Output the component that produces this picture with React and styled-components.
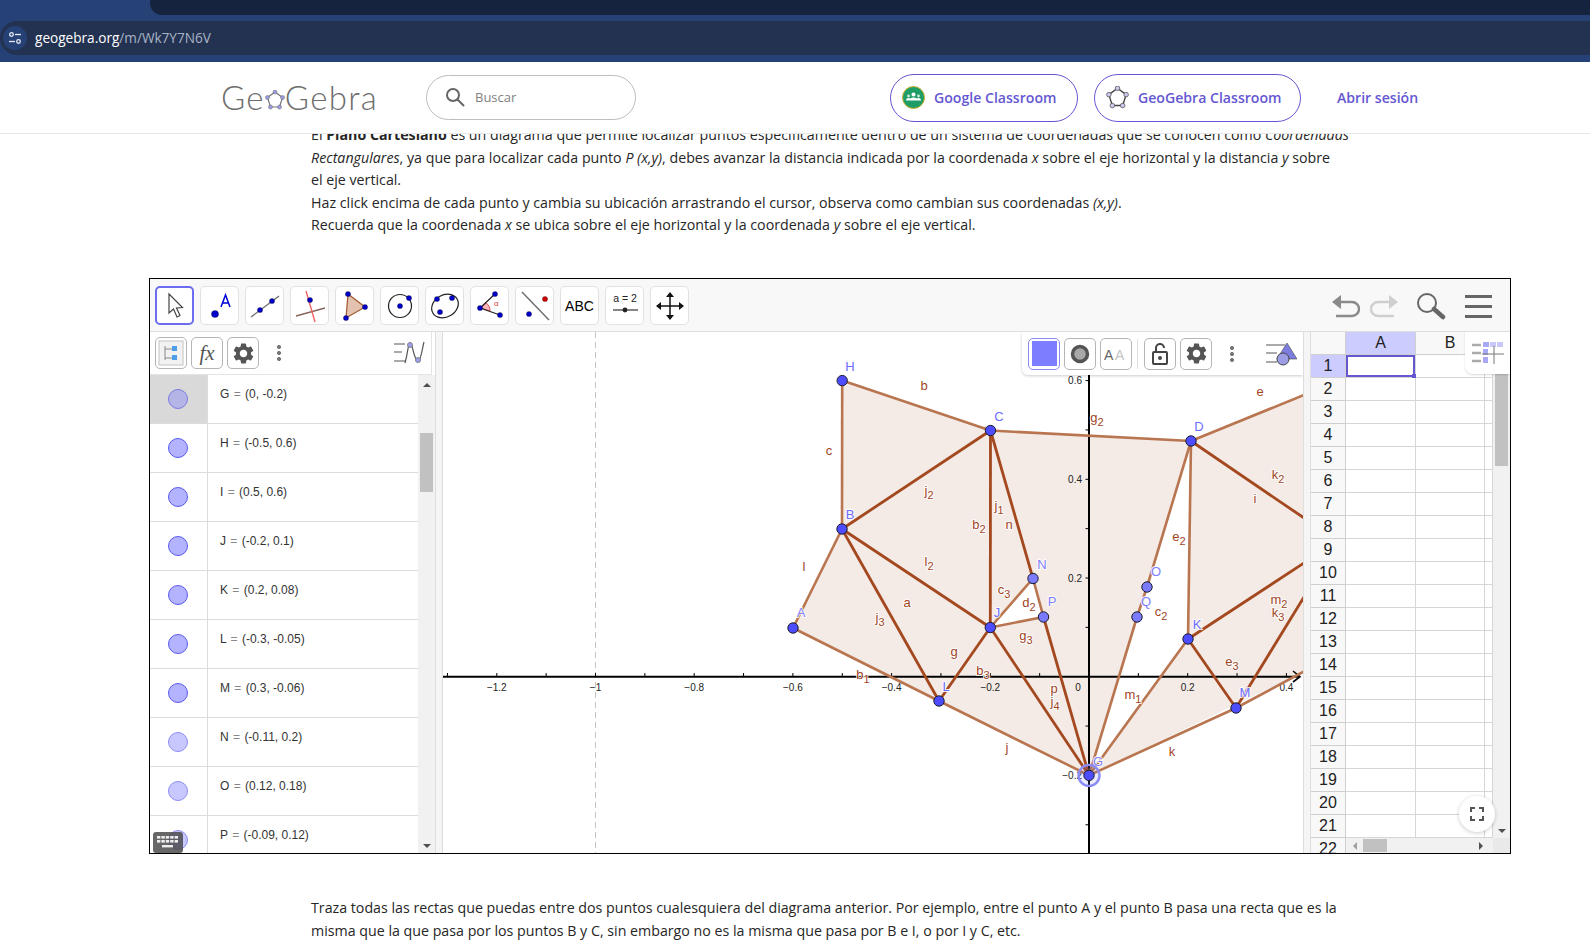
import React from 'react';
import styled, { createGlobalStyle } from 'styled-components';
import { MdSettings } from 'react-icons/md';

const Global = createGlobalStyle`
  html, body { margin: 0; padding: 0; background: #fff; }
  body { font-family: "Open Sans", "Liberation Sans", sans-serif; }
  * { box-sizing: border-box; }
`;

const Page = styled.div`width: 1590px; height: 943px; overflow: hidden; background: #fff;`;

/* browser chrome */
const Chrome = styled.div`height: 62px; background: #264176; display: flex; flex-direction: column;`;
const TabStrip = styled.div`height: 21px; display: flex; padding-left: 150px;`;
const Tab = styled.div`flex: 1; height: 15px; background: #16233f; border-bottom-left-radius: 12px;`;
const Omnibox = styled.div`
  height: 34px; background: #233251; display: flex; align-items: center; gap: 8px;
  border-radius: 17px 0 0 17px; padding-left: 3px;
`;
const SiteBadge = styled.div`
  width: 24px; height: 24px; border-radius: 50%; background: #264176;
  display: flex; align-items: center; justify-content: center;
`;
const Url = styled.div`font-size: 13.6px; color: #fff; font-family: "Open Sans", sans-serif; padding-bottom: 2px; span { color: #a9b3c6; }`;

/* site header */
const Header = styled.header`
  position: relative; z-index: 2; height: 72px; background: #fff; border-bottom: 1px solid #e6e6e6;
  display: flex; align-items: center; padding-left: 221px; margin-bottom: -10px;
`;
const Logo = styled.div`
  display: flex; align-items: center; width: 205px; color: #6d6d6d; letter-spacing: 1.3px;
  font-family: Lato, sans-serif; font-weight: 300; font-size: 33px; line-height: 1;
  svg { margin: 4px 0 0 0; }
`;
const Search = styled.div`
  width: 210px; height: 45px; border: 1px solid #bdbdbd; border-radius: 23px; display: flex; align-items: center;
  padding-left: 18px; gap: 10px; font-size: 13px; color: #7f7f7f; margin-top: -1px;
`;
const Pill = styled.div`
  height: 48px; border: 1px solid #6557d2; border-radius: 24px; display: flex; align-items: center; gap: 9px;
  color: #6557d2; font-size: 14.1px; font-weight: 600; width: ${p => p.$w}px; padding-left: ${p => p.$pl}px;
  margin-left: ${p => p.$ml}px;
`;
const Login = styled.div`color: #6557d2; font-size: 14.1px; font-weight: 600; margin-left: 36px; margin-bottom: 1px;`;

/* text */
const Article = styled.div`
  width: 1060px; margin-left: 311px; font-size: 14.22px; line-height: 22.5px; color: #262626;
  font-family: "Open Sans", sans-serif;
`;
const Line = styled.div`white-space: nowrap;`;

/* applet */
const Applet = styled.div`
  width: 1362px; height: 576px; margin: 41.5px 0 43px 149px; border: 1px solid #000; display: flex; flex-direction: column;
  font-family: "Liberation Sans", Arial, sans-serif; background: #fff; overflow: hidden;
`;
const Toolbar = styled.div`
  height: 53px; flex: none; background: #f8f8f8; border-bottom: 1px solid #dedede; display: flex; align-items: flex-start;
  padding: 7px 0 0 5px; gap: 6px; position: relative;
`;
const ToolBtn = styled.div`
  width: 39px; height: 39px; border-radius: 5px; background: #fff;
  border: ${p => p.$on ? '2px solid #6c6cf0' : '1px solid #e2e2e2'};
  display: flex; align-items: center; justify-content: center; color: #000; font-size: 14px;
`;
const ToolRight = styled.div`margin-left: auto; display: flex; align-items: center; gap: 11px; padding: 6px 18px 0 0;`;
const Body = styled.div`flex: 1; display: flex; min-height: 0;`;

const AlgebraPanel = styled.div`width: 285px; flex: none; display: flex; flex-direction: column; position: relative;`;
const MiniBar = styled.div`
  height: 43px; flex: none; width: 282px; border-bottom: 1px solid #e4e4e4; border-right: 1px solid #e4e4e4; background: #fff;
  display: flex; align-items: center; padding-left: 5px; gap: 4px;
`;
const StyleBtn = styled.div`
  width: 32px; height: 32px; border-radius: 5px; background: #fff; flex: none;
  border: ${p => p.$on ? '1.5px solid #8a8af5' : '1px solid #b5b5b5'};
  display: flex; align-items: center; justify-content: center; color: #555;
`;
const Dots = styled.div`
  width: 4px; height: 16px; margin: 0 ${p => p.$m || 14}px; flex: none;
  background: radial-gradient(circle at 50% 2px, #777 1.9px, transparent 2.2px) 0 0 / 4px 6px repeat-y;
`;
const Fx = styled.span`font-family: "Liberation Serif", serif; font-style: italic; font-size: 21px; color: #555;`;
const BarIcon = styled.div`margin-left: auto; margin-right: 6px; display: flex;`;
const ListWrap = styled.div`flex: 1; display: flex; min-height: 0;`;
const List = styled.div`flex: 1; overflow: hidden; background: #fff;`;
const Row = styled.div`height: 49px; display: flex; border-bottom: 1px solid #dcdcdc;`;
const MarbleCell = styled.div`
  width: 58px; flex: none; border-right: 1px solid #dcdcdc; background: ${p => p.$on ? '#d9d9d9' : '#fff'};
  display: flex; justify-content: center; padding: 14px 2px 0 0;
`;
const Marble = styled.div`
  width: 20px; height: 20px; border-radius: 50%; border: 1px solid ${p => p.$on ? '#7d7de0' : p.$soft ? '#8d8df0' : '#5a5af0'};
  background: ${p => p.$on ? '#b4b4e6' : p.$soft ? '#c8c8ff' : '#b3b3ff'};
`;
const Formula = styled.div`padding: 11px 0 0 12px; font-size: 12px; line-height: 16px; color: #333; white-space: nowrap; i { font-style: normal; color: #888; margin: 0 1px; }`;
const VBar = styled.div`
  width: 17px; flex: none; background: #f1f1f1; display: flex; flex-direction: column; align-items: center;
`;
const Up = styled.div`width: 0; height: 0; margin-top: 8px; border: 4px solid transparent; border-top: 0; border-bottom: 4px solid #505050;`;
const Down = styled.div`width: 0; height: 0; margin: auto 0 5px; border: 4px solid transparent; border-bottom: 0; border-top: 4px solid #505050;`;
const Thumb = styled.div`width: 13px; height: ${p => p.$h}px; margin-top: ${p => p.$t}px; background: #c1c1c1;`;
const Keyboard = styled.div`
  position: absolute; left: 3px; bottom: 0; width: 30px; height: 21px; border-radius: 3px; background: rgba(70,70,70,.82);
  display: flex; align-items: center; justify-content: center;
`;
const Splitter = styled.div`width: 8px; flex: none; background: #f5f5f5; border-left: 1px solid #dedede; border-right: 1px solid #dedede;`;
const GraphPanel = styled.div`flex: none; width: 860px; position: relative; overflow: hidden; background: #fff;`;
const GraphSvg = styled.svg`display: block; width: 860px; height: 521px;`;
const StyleBar = styled.div`
  position: absolute; top: 0; right: 0; width: 281px; height: 43px; background: #fff; border-radius: 0 0 0 6px;
  box-shadow: 0 1px 3px rgba(0,0,0,.2); display: flex; align-items: center; padding-left: 6px; gap: 4px;
`;
const Sep = styled.div`width: 1px; height: 30px; background: #e0e0e0; margin: 0 2px 0 1px;`;
const Sheet = styled.div`flex: 1; display: flex; position: relative; min-width: 0; overflow: hidden;`;
const Grid = styled.div`flex: 1; overflow: hidden; display: flex; flex-direction: column;`;
const SRow = styled.div`height: ${p => p.$h || 23}px; flex: none; display: grid; grid-template-columns: 35px 70px 69px 8px;`;
const RowHead = styled.div`
  background: ${p => p.$on ? '#ccccff' : '#f8f8f8'}; border-right: 1px solid #cfcfcf; border-bottom: 1px solid #cfcfcf;
  font-size: 16px; color: #222; display: flex; align-items: center; justify-content: center;
`;
const Cell = styled.div`
  border-right: 1px solid #d6d6d6; border-bottom: 1px solid #d6d6d6; background: #fff; position: relative;
  ${p => p.$on && `
    box-shadow: inset 0 0 0 2px #6557d2;
    &::after { content: ""; position: absolute; right: -3px; bottom: -3px; width: 6px; height: 6px; background: #6557d2; }
  `}
`;
const SheetV = styled(VBar)`position: relative;`;
const HBar = styled.div`
  position: absolute; left: 35px; right: 0; bottom: 0; height: 15px; background: #f1f1f1; display: flex; align-items: center; padding-left: 7px;
`;
const LeftArrow = styled.div`width: 0; height: 0; border: 4px solid transparent; border-left: 0; border-right: 4px solid #a0a0a0;`;
const RightArrow = styled.div`width: 0; height: 0; margin-left: 92px; border: 4px solid transparent; border-right: 0; border-left: 4px solid #505050;`;
const HThumb = styled.div`width: 24px; height: 13px; background: #c1c1c1; margin-left: 6px;`;
const Corner = styled.div`position: absolute; right: 0; bottom: 0; width: 17px; height: 15px; background: #e9e9e9;`;
const SheetCorner = styled.div`
  position: absolute; right: 0; top: 0; width: 45px; height: 42px; background: #fff; border-radius: 0 0 0 8px;
  box-shadow: 0 1px 2px rgba(0,0,0,.15); display: flex; align-items: center; justify-content: center;
`;
const Fullscreen = styled.div`
  position: absolute; right: 15px; bottom: 21px; width: 36px; height: 36px; border-radius: 50%; background: #fff;
  box-shadow: 0 1px 4px rgba(0,0,0,.2); display: flex; align-items: center; justify-content: center;
`;
const Lab = styled.text`
  font-family: "Liberation Sans", Arial, sans-serif; font-size: 13px; text-anchor: middle;
  fill: ${p => p.$c}; paint-order: stroke; stroke: rgba(255,255,255,.85); stroke-width: 2px;
`;
const Tick = styled.text`font-family: "Liberation Sans", Arial, sans-serif; font-size: 10px; fill: #222; text-anchor: ${p => p.$a || 'middle'};`;

const P = { A:[793,628],B:[842,529],C:[990.5,430.5],D:[1191,441],G:[1089,775.4],H:[842.2,380.6],J:[990.3,627.5],K:[1188,639],L:[939,701],M:[1236,708],N:[1033,578.5],O:[1147,587],P:[1043.5,617],Q:[1137,617] };
const EX = { I:[1337,381], T1:[1304,395], E:[1304,518], F:[1304,563], R:[1304,597], S:[1304,671.5] };
const pt = k => P[k] || EX[k];
const THIN = [['A','B'],['B','H'],['H','C'],['C','D'],['D','T1'],['A','L'],['L','G'],['G','M'],['M','S'],['G','Q'],['Q','O'],['O','D'],['D','K'],['K','G'],['J','N'],['J','P'],['N','P']];
const THICK = [['B','C'],['C','J'],['C','N'],['B','J'],['B','L'],['J','L'],['J','G'],['P','G'],['D','E'],['K','F'],['K','M'],['M','R']];
const poly = ks => ks.map((k,i) => `${i?'L':'M'}${pt(k).join(' ')}`).join(' ') + ' Z';
const FILL = poly(['A','B','H','C','D','T1','S','G','L']) + ' ' + poly(['G','D','K']) + ' ' + poly(['J','N','P']);

const BLUE = '#6c6cff', BROWN = '#a0451f';
const LABELS = [
  ['H',850,367,BLUE],['b',924,386],['C',999,417,BLUE],['c',829,451],['j','2',929,491],['j','1',999,506],['b','2',979,525],['n',1009,525],
  ['B',850,515,BLUE],['N',1042,565,'#8080ff'],['l','2',929,562],['l',804,567],['c','3',1004,590],['d','2',1029,603],['P',1052,602,'#8080ff'],['a',907,603],
  ['A',801,613,'#8080ff'],['j','3',880,618],['J',997,613,BLUE],['g','3',1026,636],['g',954,652],['b','3',983,671],['b','1',863,675],['L',946,687,BLUE],
  ['p',1054,689],['j','4',1055,702],['j',1007,748],['e',1260,392],['g','2',1097,418],['D',1199,427,BLUE],['k','2',1278,475],['i',1255,499],['e','2',1179,537],
  ['O',1156,572,'#8080ff'],['Q',1146,602,'#8080ff'],['c','2',1161,612],['m','2',1279,600],['k','3',1278,613],['K',1197,625,BLUE],['e','3',1232,662],['M',1245,693,BLUE],
  ['m','1',1133,695],['k',1172,752],['G',1098,762,'#8080ff'],
];
const Label = ({ d }) => {
  const sub = typeof d[1] === 'string';
  const [t, s, x, y, c] = sub ? d : [d[0], null, d[1], d[2], d[3]];
  return <Lab x={x} y={y + 4} $c={c || BROWN}>{t}{s && <tspan dy="4" fontSize="11">{s}</tspan>}</Lab>;
};
const xv = v => 1089 + 493.5 * v, yv = v => 676.7 - 493.5 * v;

const Graph = () => {
  const xt = []; for (let i = -13; i <= 4; i++) if (i) xt.push(i);
  const yt = []; for (let i = -3; i <= 6; i++) if (i) yt.push(i);
  return (
    <GraphSvg viewBox="443 332 860 521">
      <line x1={595.5} x2={595.5} y1={332} y2={853} stroke="#c4c4c4" strokeDasharray="6 4" />
      <path d={FILL} fill="#f4ebe6" fillRule="evenodd" />
      <line x1={443} x2={1300} y1={676.7} y2={676.7} stroke="#000" strokeWidth="2" />
      <line x1={1089} x2={1089} y1={374} y2={853} stroke="#000" strokeWidth="2" />
      <path d="M1293 671 L1300 676.7 L1293 682" fill="none" stroke="#000" strokeWidth="1.6" />
      {xt.map(i => <line key={i} x1={xv(i / 10)} x2={xv(i / 10)} y1={673} y2={677} stroke="#000" />)}
      {yt.map(i => <line key={i} x1={1085.5} x2={1089} y1={yv(i / 10)} y2={yv(i / 10)} stroke="#000" />)}
      {[['−1.2',-1.2],['−1',-1],['−0.8',-.8],['−0.6',-.6],['−0.4',-.4],['−0.2',-.2],['0.2',.2],['0.4',.4]].map(([t,v]) => <Tick key={t} x={xv(v)} y={691}>{t}</Tick>)}
      <Tick x={1078} y={691}>0</Tick>
      {[['0.6',.6],['0.4',.4],['0.2',.2],['−0.2',-.2]].map(([t,v]) => <Tick key={t} x={1082} y={yv(v) + 3.5} $a="end">{t}</Tick>)}
      {THIN.map(([a,b]) => <line key={a+b} x1={pt(a)[0]} y1={pt(a)[1]} x2={pt(b)[0]} y2={pt(b)[1]} stroke="#b8754f" strokeWidth="2.6" />)}
      {THICK.map(([a,b]) => <line key={a+b} x1={pt(a)[0]} y1={pt(a)[1]} x2={pt(b)[0]} y2={pt(b)[1]} stroke="#a4481f" strokeWidth="2.8" />)}
      {LABELS.map((d, i) => <Label key={i} d={d} />)}
      <circle cx={P.G[0]} cy={P.G[1]} r="10.5" fill="rgba(120,120,255,.15)" stroke="#8c8cf5" strokeWidth="2.4" />
      {Object.keys(P).map(k => (
        <circle key={k} cx={P[k][0]} cy={P[k][1]} r="5.2" fill={'NOPQ'.includes(k) ? '#7b7bff' : '#4d4dff'} stroke="#1c1c2c" strokeWidth="1" />
      ))}
    </GraphSvg>
  );
};

const Ic = ({ children, w = 34, h = 34 }) => <svg width={w} height={h} viewBox={`0 0 ${w} ${h}`}>{children}</svg>;
const Dot = ({ x, y, c = '#0000c8', r = 2.6 }) => <circle cx={x} cy={y} r={r} fill={c} stroke="#111" strokeWidth=".3" />;

const TOOLS = [
  <Ic><path d="M11 5 L11 24 L15.5 20 L19 28 L22 26.5 L18.5 19 L24.5 18.5 Z" fill="#fff" stroke="#444" strokeWidth="1.2" /></Ic>,
  <Ic><Dot x={12} y={25} r={3.6} /><path d="M18 18 L22.5 6 L27 18 M19.5 14 H25.5" fill="none" stroke="#0000d8" strokeWidth="1.5" /></Ic>,
  <Ic><line x1={3} y1={28} x2={31} y2={7} stroke="#707070" strokeWidth="1.4" /><Dot x={12} y={21} /><Dot x={24} y={12} /></Ic>,
  <Ic><line x1={3} y1={27} x2={32} y2={19} stroke="#84665c" strokeWidth="1.4" /><line x1={13} y1={2} x2={22} y2={33} stroke="#f06464" strokeWidth="1.4" /><Dot x={17} y={11} /></Ic>,
  <Ic><path d="M10 5 L27 18 L8 29 Z" fill="#e3c3b0" stroke="#a0562e" strokeWidth="1.2" /><Dot x={10} y={5} /><Dot x={27} y={18} /><Dot x={8} y={29} /></Ic>,
  <Ic><circle cx={17} cy={17} r={11.5} fill="none" stroke="#222" strokeWidth="1.2" /><Dot x={17} y={17} /><Dot x={26} y={9} /></Ic>,
  <Ic><ellipse cx={17} cy={17} rx={14} ry={11} transform="rotate(-30 17 17)" fill="none" stroke="#222" strokeWidth="1.2" /><Dot x={9} y={10} /><Dot x={24} y={9} /><Dot x={12} y={23} /></Ic>,
  <Ic><path d="M8 19 L13 14 A9 9 0 0 1 17 22 Z" fill="#f5b8b8" stroke="#e05050" strokeWidth="1" /><path d="M7 19 L22 5 M7 19 L27 26" fill="none" stroke="#222" strokeWidth="1.2" /><Dot x={7} y={19} /><Dot x={22} y={5} /><Dot x={27} y={26} /><text x={21} y={17} fontSize="8" fill="#e04040">α</text></Ic>,
  <Ic><line x1={4} y1={3} x2={31} y2={31} stroke="#707070" strokeWidth="1.5" /><Dot x={11} y={25} /><Dot x={27} y={10} c="#d00000" /></Ic>,
  <span>ABC</span>,
  <Ic><text x={17} y={13} fontSize="10.5" textAnchor="middle" fontFamily="Liberation Sans" fill="#222">a = 2</text><line x1={5} y1={21} x2={30} y2={21} stroke="#333" strokeWidth="1.2" /><circle cx={17} cy={21} r={2.4} fill="#222" /></Ic>,
  <Ic><path d="M17 5 V29 M5 17 H29" stroke="#111" strokeWidth="1.5" /><path d="M17 3 L21 8 H13 Z M17 31 L21 26 H13 Z M3 17 L8 13 V21 Z M31 17 L26 13 V21 Z" fill="#111" /></Ic>,
];

const ROWS = [['G','(0, -0.2)'],['H','(-0.5, 0.6)'],['I','(0.5, 0.6)'],['J','(-0.2, 0.1)'],['K','(0.2, 0.08)'],['L','(-0.3, -0.05)'],['M','(0.3, -0.06)'],['N','(-0.11, 0.2)',1],['O','(0.12, 0.18)',1],['P','(-0.09, 0.12)',1]];
const NUMS = Array.from({ length: 22 }, (_, i) => i + 1);

const Pentagon = ({ s = 20, c = '#555', f = '#9a9ae6' }) => (
  <svg width={s} height={s} viewBox="0 0 20 20">
    <path d="M10 2 L17.5 7.5 L14.5 17 L5.5 17 L2.5 7.5 Z" fill="none" stroke={c} strokeWidth="1.2" />
    {[[10,2],[17.5,7.5],[14.5,17],[5.5,17],[2.5,7.5]].map(([x,y],i) => <circle key={i} cx={x} cy={y} r="2" fill={f} stroke={c} strokeWidth=".6" />)}
  </svg>
);

export default function App() {
  return (
    <Page>
      <Global />
      <Chrome>
        <TabStrip><Tab /></TabStrip>
        <Omnibox>
          <SiteBadge>
            <svg width="14" height="14" viewBox="0 0 14 14" fill="none" stroke="#e6ebf5" strokeWidth="1.3"><circle cx="3.5" cy="3.5" r="1.8" /><path d="M7 3.5H13" /><circle cx="10.5" cy="10.5" r="1.8" /><path d="M1 10.5H7" /></svg>
          </SiteBadge>
          <Url>geogebra.org<span>/m/Wk7Y7N6V</span></Url>
        </Omnibox>
      </Chrome>
      <Header>
        <Logo>Ge<Pentagon s={20} c="#777" />Gebra</Logo>
        <Search>
          <svg width="20" height="20" viewBox="0 0 20 20" fill="none" stroke="#666" strokeWidth="2"><circle cx="8" cy="8" r="6" /><path d="M12.5 12.5 L18.5 18.5" strokeLinecap="round" /></svg>
          Buscar
        </Search>
        <Pill $w={188} $pl={11} $ml={254}>
          <svg width="23" height="23" viewBox="0 0 23 23"><circle cx="11.5" cy="11.5" r="11" fill="#1f9d66" stroke="#d0b030" strokeWidth="1" /><circle cx="11.5" cy="8.5" r="2" fill="#fff" /><circle cx="6.5" cy="10" r="1.4" fill="#cfe8d8" /><circle cx="16.5" cy="10" r="1.4" fill="#cfe8d8" /><path d="M7.5 14.5 a4 3 0 0 1 8 0 Z M4 14.5 a2.5 2.5 0 0 1 5 0 Z M14 14.5 a2.5 2.5 0 0 1 5 0 Z" fill="#fff" /></svg>
          Google Classroom
        </Pill>
        <Pill $w={207} $pl={11} $ml={16}>
          <Pentagon s={23} c="#444" f="#c9c9ee" />
          GeoGebra Classroom
        </Pill>
        <Login>Abrir sesión</Login>
      </Header>
      <Article>
        <Line>El <b>Plano Cartesiano</b> es un diagrama que permite localizar puntos específicamente dentro de un sistema de coordenadas que se conocen como <em>Coordenadas</em></Line>
        <Line><em>Rectangulares</em>, ya que para localizar cada punto <em>P (x,y)</em>, debes avanzar la distancia indicada por la coordenada <em>x</em> sobre el eje horizontal y la distancia <em>y</em> sobre</Line>
        <Line>el eje vertical.</Line>
        <Line>Haz click encima de cada punto y cambia su ubicación arrastrando el cursor, observa como cambian sus coordenadas <em>(x,y)</em>.</Line>
        <Line>Recuerda que la coordenada <em>x</em> se ubica sobre el eje horizontal y la coordenada <em>y</em> sobre el eje vertical.</Line>
      </Article>
      <Applet>
        <Toolbar>
          {TOOLS.map((t, i) => <ToolBtn key={i} $on={i === 0}>{t}</ToolBtn>)}
          <ToolRight>
            <svg width="28" height="24" viewBox="0 0 28 24" fill="none"><path d="M4 8 H20 a6 6 0 0 1 0 14 H4" stroke="#8a8a8a" strokeWidth="2.4" /><path d="M0 8 L9 1 V15 Z" fill="#8a8a8a" /></svg>
            <svg width="28" height="24" viewBox="0 0 28 24" fill="none" style={{ marginLeft: -1 }}><path d="M24 8 H8 a6 6 0 0 0 0 14 H24" stroke="#cfcfcf" strokeWidth="2.4" /><path d="M28 8 L19 1 V15 Z" fill="#cfcfcf" /></svg>
            <svg width="30" height="28" viewBox="0 0 30 28" fill="none" style={{ margin: '0 8px 0 7px' }}><circle cx="11" cy="11" r="9" stroke="#666" strokeWidth="2" /><path d="M18 17 L27 25" stroke="#666" strokeWidth="4.5" strokeLinecap="round" /></svg>
            <svg width="27" height="24" viewBox="0 0 27 24"><path d="M0 2.5H27M0 12.5H27M0 22.5H27" stroke="#666" strokeWidth="3" /></svg>
          </ToolRight>
        </Toolbar>
        <Body>
          <AlgebraPanel>
            <MiniBar>
              <StyleBtn $on={false}>
                <svg width="26" height="26" viewBox="0 0 26 26" fill="none"><rect x="1" y="1" width="24" height="24" fill="#f2f2f2" stroke="#c4c4c4" /><path d="M7 6 V20 M7 9 H15 M7 18 H15" stroke="#888" /><rect x="14" y="6" width="5" height="5" fill="#4f9ee8" /><rect x="14" y="15" width="5" height="5" fill="#4f9ee8" /></svg>
              </StyleBtn>
              <StyleBtn><Fx>fx</Fx></StyleBtn>
              <StyleBtn><MdSettings size={25} color="#555" /></StyleBtn>
              <Dots $m={14} />
              <BarIcon>
                <svg width="32" height="24" viewBox="0 0 32 24" fill="none"><path d="M1 3H12M1 11H9M1 20H12" stroke="#aaa" strokeWidth="2" /><path d="M12 22 C15 12 15 2 17 2 C20 2 20 18 25 20 C28 20 29 8 31 1" stroke="#555" strokeWidth="1.2" /><circle cx="17" cy="4" r="2.6" fill="#9d9de6" stroke="#666" strokeWidth=".6" /><circle cx="25" cy="19" r="2.6" fill="#9d9de6" stroke="#666" strokeWidth=".6" /></svg>
              </BarIcon>
            </MiniBar>
            <ListWrap>
              <List>
                {ROWS.map(([n, v, soft], i) => (
                  <Row key={n}>
                    <MarbleCell $on={i === 0}><Marble $on={i === 0} $soft={soft} /></MarbleCell>
                    <Formula>{n} <i>=</i> {v}</Formula>
                  </Row>
                ))}
              </List>
              <VBar><Up /><Thumb $h={59} $t={46} /><Down /></VBar>
            </ListWrap>
            <Keyboard>
              <svg width="22" height="15" viewBox="0 0 22 15" fill="#eee">
                {[0,1,2,3,4].map(i => <rect key={i} x={i * 4.4} y="1" width="3.4" height="2.6" />)}
                {[0,1,2,3,4].map(i => <rect key={i} x={i * 4.4} y="5" width="3.4" height="2.6" />)}
                <rect x="5" y="10" width="11" height="2.4" />
              </svg>
            </Keyboard>
          </AlgebraPanel>
          <Splitter />
          <GraphPanel>
            <Graph />
            <StyleBar>
              <StyleBtn $on><svg width="25" height="25"><rect width="25" height="25" fill="#7d7dff" /></svg></StyleBtn>
              <StyleBtn><svg width="20" height="20"><circle cx="10" cy="10" r="7.5" fill="#a8a8a8" stroke="#555" strokeWidth="3.5" /></svg></StyleBtn>
              <StyleBtn><svg width="24" height="16" viewBox="0 0 24 16"><text x="0" y="14" fontSize="14" fontFamily="Liberation Sans" fill="#666">A</text><text x="11" y="14" fontSize="14" fontFamily="Liberation Sans" fill="#c4c4c4">A</text></svg></StyleBtn>
              <Sep />
              <StyleBtn><svg width="18" height="24" viewBox="0 0 18 24" fill="none" stroke="#444" strokeWidth="2"><rect x="2" y="10" width="14" height="12" rx="1" /><path d="M5 10 V6 a4 4 0 0 1 8 0" /><circle cx="9" cy="16" r="1" fill="#444" /></svg></StyleBtn>
              <StyleBtn><MdSettings size={25} color="#555" /></StyleBtn>
              <Dots $m={14} />
              <BarIcon>
                <svg width="32" height="24" viewBox="0 0 32 24" fill="none"><path d="M1 3H20M1 11H12M1 20H12" stroke="#aaa" strokeWidth="2" /><path d="M22 1 L32 17 H12 Z" fill="#7d7de0" stroke="#444" strokeWidth=".6" /><circle cx="18" cy="17" r="6" fill="#9d9de6" stroke="#444" strokeWidth="1" /></svg>
              </BarIcon>
            </StyleBar>
          </GraphPanel>
          <Splitter />
          <Sheet>
            <Grid>
              <SRow $h={23}>
                <RowHead />
                <RowHead $on>A</RowHead>
                <RowHead>B</RowHead>
                <RowHead />
              </SRow>
              {NUMS.map(n => (
                <SRow key={n}>
                  <RowHead $on={n === 1}>{n}</RowHead>
                  <Cell $on={n === 1} />
                  <Cell />
                  <Cell />
                </SRow>
              ))}
            </Grid>
            <SheetV><Thumb $h={92} $t={42} /><Down style={{ marginBottom: 20 }} /></SheetV>
            <HBar><LeftArrow /><HThumb /><RightArrow /></HBar>
            <Corner />
            <SheetCorner>
              <svg width="34" height="24" viewBox="0 0 34 24"><path d="M1 4H10M1 12H10M1 20H10" stroke="#aaa" strokeWidth="2.4" /><rect x="12" y="1" width="6" height="5" fill="#a8a8f5" /><rect x="19" y="1" width="6" height="5" fill="#c8c8fa" /><rect x="26" y="1" width="6" height="5" fill="#c8c8fa" /><rect x="12" y="8" width="5" height="6" fill="#a8a8f5" /><rect x="12" y="16" width="5" height="6" fill="#a8a8f5" /><path d="M23 5 V23 M11 13 H33" stroke="#777" /></svg>
            </SheetCorner>
            <Fullscreen>
              <svg width="14" height="14" viewBox="0 0 14 14" fill="none" stroke="#555" strokeWidth="2"><path d="M1 5V1H5M9 1H13V5M13 9V13H9M5 13H1V9" /></svg>
            </Fullscreen>
          </Sheet>
        </Body>
      </Applet>
      <Article>
        <Line>Traza todas las rectas que puedas entre dos puntos cualesquiera del diagrama anterior. Por ejemplo, entre el punto A y el punto B pasa una recta que es la</Line>
        <Line>misma que la que pasa por los puntos B y C, sin embargo no es la misma que pasa por B e I, o por I y C, etc.</Line>
      </Article>
    </Page>
  );
}
